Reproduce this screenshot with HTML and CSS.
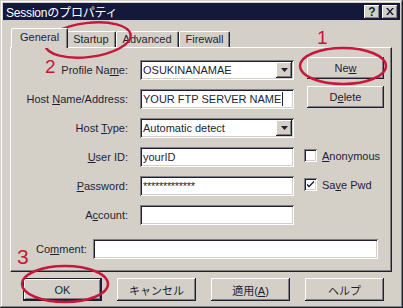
FILE: index.html
```html
<!DOCTYPE html>
<html lang="ja">
<head>
  <meta charset="UTF-8" />
  <title>Sessionのプロパティ</title>
  <link rel="stylesheet" href="styles.css">
</head>
<body>
  <div class="window">
    <div class="titlebar">
      <span class="title">Sessionのプロパティ</span>
      <div class="title-buttons">
        <span class="tbtn">?</span>
        <span class="tbtn">
          <svg width="8" height="7" viewBox="0 0 8 7"><path d="M0 0h2l2 2.5 2-2.5h2l-3 3.5 3 3.5h-2l-2-2.5-2 2.5h-2l3-3.5z"/></svg>
        </span>
      </div>
    </div>

    <div class="dialog">
      <div class="tabs">
        <div class="tab active">General</div>
        <div class="tab">Startup</div>
        <div class="tab">Advanced</div>
        <div class="tab">Firewall</div>
      </div>

      <div class="panel">
        <div class="form">
          <span class="label">Profile Na<u>m</u>e:</span>
          <div class="field combo">
            <span>OSUKINANAMAE</span>
            <span class="drop"><svg width="7" height="4" viewBox="0 0 7 4"><path d="M0 0h7l-3.5 4z"/></svg></span>
          </div>
          <button class="btn side">Ne<u>w</u></button>

          <span class="label">Host <u>N</u>ame/Address:</span>
          <div class="field">YOUR FTP SERVER NAME<span class="caret"></span></div>
          <button class="btn side">D<u>e</u>lete</button>

          <span class="label">Host <u>T</u>ype:</span>
          <div class="field combo">
            <span>Automatic detect</span>
            <span class="drop"><svg width="7" height="4" viewBox="0 0 7 4"><path d="M0 0h7l-3.5 4z"/></svg></span>
          </div>
          <span></span>

          <span class="label"><u>U</u>ser ID:</span>
          <div class="field">yourID</div>
          <label class="check"><span class="box"></span><span><u>A</u>nonymous</span></label>

          <span class="label"><u>P</u>assword:</span>
          <div class="field password">*************</div>
          <label class="check"><span class="box"><svg width="9" height="9" viewBox="0 0 9 9"><path d="M1 3.5l2 2 5-5v2l-5 5-2-2z"/></svg></span><span>Sa<u>v</u>e Pwd</span></label>

          <span class="label">A<u>c</u>count:</span>
          <div class="field"></div>
          <span></span>
        </div>

        <div class="comment-row">
          <span class="comment-label">Co<u>m</u>ment:</span>
          <div class="field"></div>
        </div>
      </div>

      <div class="actions">
        <button class="btn default">OK</button>
        <button class="btn">キャンセル</button>
        <button class="btn">適用(<u>A</u>)</button>
        <button class="btn">ヘルプ</button>
      </div>
    </div>

    <!-- red annotations drawn over the dialog -->
    <svg class="marks" width="403" height="308" viewBox="0 0 403 308">
      <ellipse cx="88" cy="40" rx="43" ry="17" transform="rotate(-7 88 40)"/>
      <ellipse cx="343" cy="66" rx="43" ry="18"/>
      <ellipse cx="65" cy="284" rx="43" ry="18"/>
      <text x="317" y="44">1</text>
      <text x="45" y="73">2</text>
      <text x="17" y="264" class="big">3</text>
    </svg>
  </div>
</body>
</html>
```

FILE: styles.css
```css
:root {
  --face: #d4d0c8;
  --light: #ffffff;
  --shadow: #808080;
  --dark: #1c1f36;
  --title: #14193c;
  --mark: #c8173a;
}

* {
  box-sizing: border-box;
}

body {
  margin: 0;
  background: var(--face);
  font-family: "Liberation Sans", "Noto Sans CJK JP", sans-serif;
  font-size: 11px;
  color: var(--dark);
}

u {
  text-decoration: underline;
  text-underline-offset: 1px;
}

/* Window frame */
.window {
  position: relative;
  width: 403px;
  height: 308px;
  padding: 3px;
  background: var(--face);
  box-shadow:
    inset -1px -1px var(--dark),
    inset 1px 1px var(--face),
    inset -2px -2px var(--shadow),
    inset 2px 2px var(--light);
}

.titlebar {
  height: 17px;
  background: var(--title);
  color: #fff;
  display: flex;
  align-items: center;
  justify-content: space-between;
  padding: 0 2px 0 3px;
}

.title {
  font-size: 12px;
  letter-spacing: -0.2px;
}

.title-buttons {
  display: flex;
  gap: 2px;
}

.tbtn {
  width: 16px;
  height: 14px;
  display: flex;
  align-items: center;
  justify-content: center;
  background: var(--face);
  color: var(--dark);
  font-weight: bold;
  font-size: 12px;
  box-shadow:
    inset -1px -1px var(--dark),
    inset 1px 1px var(--light),
    inset -2px -2px var(--shadow);
}

.tbtn svg {
  fill: var(--dark);
}

/* Dialog body */
.dialog {
  padding: 8px 8px 0 7px;
}

.tabs {
  display: flex;
  align-items: flex-end;
  height: 19px;
  padding-left: 3px;
}

.tab {
  height: 16px;
  padding: 0 6px;
  line-height: 14px;
  border-top: 1px solid var(--light);
  border-left: 1px solid var(--light);
  border-right: 1px solid var(--dark);
  border-radius: 2px 2px 0 0;
  box-shadow: inset -1px 0 var(--shadow);
  background: var(--face);
}

.tab.active {
  position: relative;
  z-index: 1;
  height: 20px;
  margin: 0 -2px -1px;
  padding: 0 8px;
  line-height: 17px;
}

.panel {
  padding: 12px 0 12px 1px;
  border-top: 1px solid var(--light);
  border-left: 1px solid var(--light);
  border-right: 1px solid var(--dark);
  border-bottom: 1px solid var(--dark);
  box-shadow: inset -1px -1px var(--shadow);
}

.form {
  display: grid;
  grid-template-columns: 118px 154px 80px;
  grid-auto-rows: 20px;
  column-gap: 10px;
  row-gap: 9px;
  align-items: center;
}

.label {
  text-align: right;
  padding-right: 2px;
}

.field {
  height: 20px;
  display: flex;
  align-items: center;
  padding: 0 3px;
  background: #fff;
  white-space: nowrap;
  box-shadow:
    inset 1px 1px var(--shadow),
    inset -1px -1px var(--light),
    inset 2px 2px var(--dark),
    inset -2px -2px var(--face);
}

.combo {
  justify-content: space-between;
  padding-right: 2px;
}

.drop {
  width: 16px;
  height: 16px;
  display: flex;
  align-items: center;
  justify-content: center;
  background: var(--face);
  box-shadow:
    inset -1px -1px var(--dark),
    inset 1px 1px var(--light),
    inset -2px -2px var(--shadow);
}

.drop svg {
  fill: var(--dark);
}

.caret {
  display: inline-block;
  width: 1px;
  height: 14px;
  margin-left: 1px;
  background: var(--dark);
}

.password {
  letter-spacing: -0.3px;
}

.check {
  display: flex;
  align-items: center;
  gap: 5px;
  margin-top: -3px;
}

.box {
  width: 13px;
  height: 13px;
  display: flex;
  align-items: center;
  justify-content: center;
  background: #fff;
  box-shadow:
    inset 1px 1px var(--shadow),
    inset -1px -1px var(--light),
    inset 2px 2px var(--dark),
    inset -2px -2px var(--face);
}

.box svg {
  fill: var(--dark);
}

.comment-row {
  display: flex;
  align-items: center;
  margin-top: 14px;
  padding: 0 13px 0 24px;
}

.comment-label {
  width: 57px;
}

.comment-row .field {
  flex: 1;
}

/* Buttons */
.btn {
  height: 23px;
  padding: 0;
  font: inherit;
  color: var(--dark);
  background: var(--face);
  border: none;
  box-shadow:
    inset -1px -1px var(--dark),
    inset 1px 1px var(--light),
    inset -2px -2px var(--shadow);
}

.btn.side {
  width: 77px;
  height: 22px;
  margin-left: 3px;
  align-self: start;
  margin-top: -3px;
}

.btn.default {
  border: 1px solid var(--dark);
}

.actions {
  display: flex;
  gap: 15px;
  margin-top: 6px;
  padding-left: 13px;
}

.actions .btn {
  width: 79px;
}

/* Red annotation marks */
.marks {
  position: absolute;
  top: 0;
  left: 0;
  pointer-events: none;
}

.marks ellipse {
  fill: none;
  stroke: var(--mark);
  stroke-width: 2.5;
}

.marks text {
  fill: var(--mark);
  font-family: "Liberation Sans", sans-serif;
  font-size: 19px;
}

.marks text.big {
  font-size: 21px;
}
```
